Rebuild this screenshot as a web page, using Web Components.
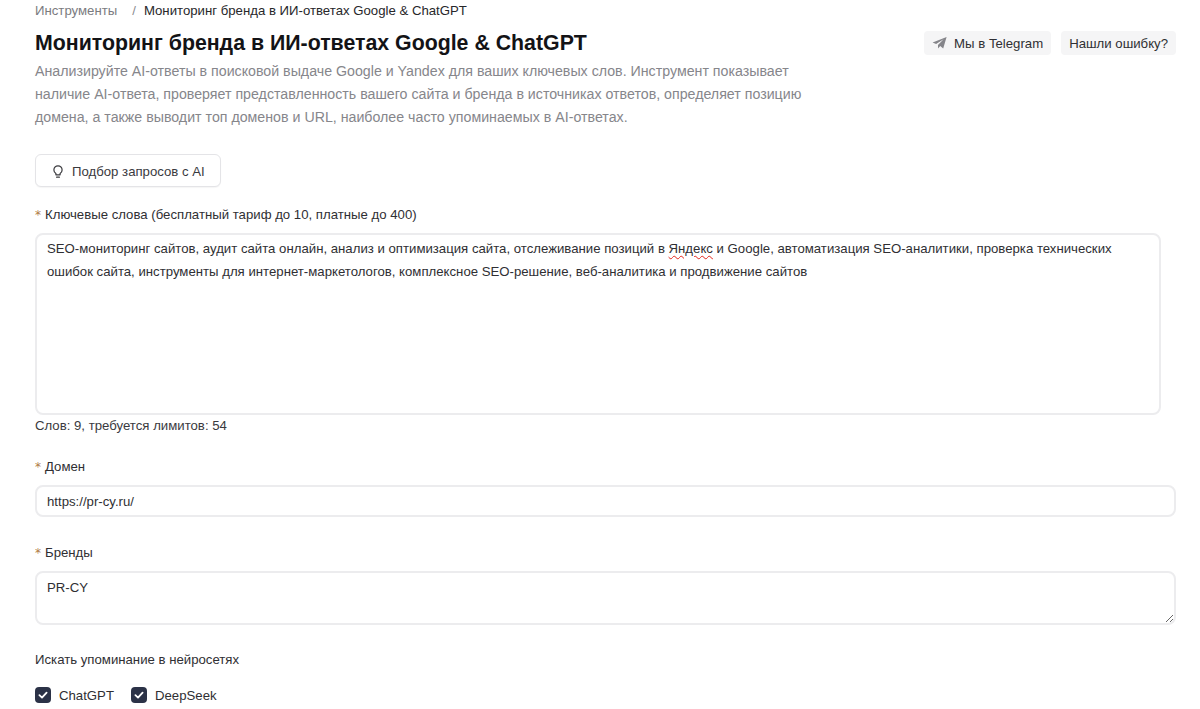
<!DOCTYPE html>
<html lang="ru">
<head>
<meta charset="utf-8">
<title>Мониторинг бренда</title>
<style>
  html, body { margin: 0; background: #fff; }
  body { font-family: "Liberation Sans", Arial, sans-serif; color: #27272a; overflow: hidden; height: 709px; }
  .typo { text-decoration: underline wavy #e2261c; text-decoration-thickness: 1px; text-underline-offset: 2px; }
</style>
</head>
<body>
<tool-page>
  <bread-crumbs parent="Инструменты">Мониторинг бренда в ИИ-ответах Google &amp; ChatGPT</bread-crumbs>
  <page-head>
    <span slot="title">Мониторинг бренда в ИИ-ответах Google &amp; ChatGPT</span>
    <soft-button slot="actions" icon="telegram">Мы в Telegram</soft-button>
    <soft-button slot="actions">Нашли ошибку?</soft-button>
    Анализируйте AI-ответы в поисковой выдаче Google и Yandex для ваших ключевых слов. Инструмент показывает наличие AI-ответа, проверяет представленность вашего сайта и бренда в источниках ответов, определяет позицию домена, а также выводит топ доменов и URL, наиболее часто упоминаемых в AI-ответах.
  </page-head>
  <ai-button>Подбор запросов с AI</ai-button>
  <form-field label="Ключевые слова (бесплатный тариф до 10, платные до 400)" required style="margin-top:19px">
    <text-box height="182" style="margin-right:15px">SEO-мониторинг сайтов, аудит сайта онлайн, анализ и оптимизация сайта, отслеживание позиций в <span class="typo">Яндекс</span> и Google, автоматизация SEO-аналитики, проверка технических<br>ошибок сайта, инструменты для интернет-маркетологов, комплексное SEO-решение, веб-аналитика и продвижение сайтов</text-box>
    <span slot="note">Слов: 9, требуется лимитов: 54</span>
  </form-field>
  <form-field label="Домен" required style="margin-top:24px">
    <text-box height="32" style="padding-top:3px">https://pr-cy.ru/</text-box>
  </form-field>
  <form-field label="Бренды" required style="margin-top:27px">
    <text-box height="54" resizable style="padding-top:3px">PR-CY</text-box>
  </form-field>
  <check-group label="Искать упоминание в нейросетях">
    <check-item>ChatGPT</check-item>
    <check-item>DeepSeek</check-item>
  </check-group>
</tool-page>

<script>
class ToolPage extends HTMLElement {
  constructor() {
    super()
    this.attachShadow({ mode: 'open' })
    this.shadowRoot.innerHTML = `
      <style>
        :host { display: flex; flex-direction: column; align-items: stretch; padding: 0 24px 0 35px; font-size: 13.2px; }
        ::slotted(ai-button) { align-self: flex-start; }
      </style>
      <slot></slot>
    `
  }
}

class BreadCrumbs extends HTMLElement {
  constructor() {
    super()
    this.attachShadow({ mode: 'open' })
    this.shadowRoot.innerHTML = `
      <style>
        :host { display: flex; height: 21px; align-items: center; font-size: 13.2px; color: #27272a; }
        .parent { color: #7b7b80; }
        .sep { color: #8b8b90; margin: 0 8px 0 15px; }
      </style>
      <span class="parent"></span><span class="sep">/</span><slot></slot>
    `
  }
  connectedCallback() {
    this.shadowRoot.querySelector('.parent').textContent = this.getAttribute('parent')
  }
}

class PageHead extends HTMLElement {
  constructor() {
    super()
    this.attachShadow({ mode: 'open' })
    this.shadowRoot.innerHTML = `
      <style>
        :host { display: block; }
        .top { display: flex; justify-content: space-between; align-items: center; height: 34px; padding-top: 5px; }
        h1 { margin: 0; padding-top: 1px; font-size: 21.32px; line-height: 33px; font-weight: 700; color: #131316; }
        .actions { display: flex; gap: 10px; }
        p { margin: 0; width: 785px; font-size: 14.21px; line-height: 23px; color: #86868b; }
      </style>
      <div class="top">
        <h1><slot name="title"></slot></h1>
        <div class="actions"><slot name="actions"></slot></div>
      </div>
      <p><slot></slot></p>
    `
  }
}

class SoftButton extends HTMLElement {
  constructor() {
    super()
    this.attachShadow({ mode: 'open' })
    this.shadowRoot.innerHTML = `
      <style>
        :host { display: inline-flex; align-items: center; gap: 7px; height: 24px; padding: 0 8px; background: #f5f5f6; border-radius: 4px; font-size: 13.2px; color: #2f2f33; }
        svg { width: 15px; height: 14px; display: block; }
      </style>
      <span id="ic"></span><slot></slot>
    `
  }
  connectedCallback() {
    const ic = this.shadowRoot.querySelector('#ic')
    if (this.getAttribute('icon') === 'telegram') {
      ic.innerHTML = `<svg viewBox="0 0 15 14"><path d="M14.6 1.1 L0.6 6.6 L4.1 8 L11.6 3.2 L6 8.9 L6 12.6 L8.2 10.1 L11.2 12.4 Z" fill="#85858a"/></svg>`
    } else {
      ic.remove()
    }
  }
}

class AiButton extends HTMLElement {
  constructor() {
    super()
    this.attachShadow({ mode: 'open' })
    this.shadowRoot.innerHTML = `
      <style>
        :host { display: inline-flex; align-items: center; gap: 7px; box-sizing: border-box; height: 33px; margin-top: 25px; padding: 1px 15px 0; background: #fff; border: 1px solid #e4e4e7; border-radius: 6px; font-size: 13.2px; color: #3a3a3e; box-shadow: 0 1px 1px rgba(0,0,0,.04); }
        svg { width: 14px; height: 15px; display: block; }
      </style>
      <svg viewBox="0 0 14 15" fill="none" stroke="#3a3a3e" stroke-width="1.2" stroke-linecap="round" stroke-linejoin="round">
        <path d="M4.9 9.6 C3.6 8.7 2.9 7.4 2.9 5.9 a4.1 4.1 0 0 1 8.2 0 C11.1 7.4 10.4 8.7 9.1 9.6 V10.8 H4.9 Z"/>
        <path d="M5.6 13.2 H8.4"/>
      </svg>
      <slot></slot>
    `
  }
}

class FormField extends HTMLElement {
  constructor() {
    super()
    this.attachShadow({ mode: 'open' })
    this.shadowRoot.innerHTML = `
      <style>
        :host { display: block; }
        .label { display: flex; align-items: center; height: 16px; font-size: 13.2px; color: #2f2f33; }
        .star { width: 10px; padding-top: 3px; color: #b07a45; font-family: "DejaVu Sans", sans-serif; font-size: 12px; line-height: 13px; }
        .control { margin-top: 11px; }
        .note { font-size: 13.2px; line-height: 16px; margin-top: 3px; color: #3a3a3e; }
      </style>
      <div class="label"><span class="star"></span><span class="text"></span></div>
      <div class="control"><slot></slot></div>
      <div class="note"><slot name="note"></slot></div>
    `
  }
  connectedCallback() {
    const root = this.shadowRoot
    root.querySelector('.text').textContent = this.getAttribute('label')
    root.querySelector('.star').textContent = this.hasAttribute('required') ? '*' : ''
    if (!this.querySelector('[slot=note]')) root.querySelector('.note').style.display = 'none'
  }
}

class TextBox extends HTMLElement {
  constructor() {
    super()
    this.attachShadow({ mode: 'open' })
    this.shadowRoot.innerHTML = `
      <style>
        :host { display: block; box-sizing: border-box; padding: 2px 10px; background: #fff; border: 2px solid #ececee; border-radius: 8px; font-size: 13.2px; line-height: 23px; color: #2f2f33; overflow: hidden; }
        :host([resizable]) { resize: vertical; overflow: auto; }
      </style>
      <slot></slot>
    `
  }
  connectedCallback() {
    this.style.height = this.getAttribute('height') + 'px'
  }
}

class CheckGroup extends HTMLElement {
  constructor() {
    super()
    this.attachShadow({ mode: 'open' })
    this.shadowRoot.innerHTML = `
      <style>
        :host { display: block; margin-top: 27px; }
        .title { font-size: 13.2px; line-height: 16px; color: #2f2f33; }
        .items { display: flex; gap: 17px; margin-top: 19px; }
      </style>
      <div class="title"></div>
      <div class="items"><slot></slot></div>
    `
  }
  connectedCallback() {
    this.shadowRoot.querySelector('.title').textContent = this.getAttribute('label')
  }
}

class CheckItem extends HTMLElement {
  constructor() {
    super()
    this.attachShadow({ mode: 'open' })
    this.shadowRoot.innerHTML = `
      <style>
        :host { display: inline-flex; align-items: center; gap: 8px; font-size: 13.2px; color: #2f2f33; }
        .box { width: 16px; height: 16px; border-radius: 4px; background: #2b3247; display: flex; align-items: center; justify-content: center; }
        svg { width: 12px; height: 12px; display: block; }
      </style>
      <span class="box"><svg viewBox="0 0 12 12" fill="none" stroke="#fff" stroke-width="1.8" stroke-linecap="round" stroke-linejoin="round"><path d="M2.4 6.2 L5 8.6 L9.6 3.6"/></svg></span>
      <slot></slot>
    `
  }
}

customElements.define('tool-page', ToolPage)
customElements.define('bread-crumbs', BreadCrumbs)
customElements.define('page-head', PageHead)
customElements.define('soft-button', SoftButton)
customElements.define('ai-button', AiButton)
customElements.define('form-field', FormField)
customElements.define('text-box', TextBox)
customElements.define('check-group', CheckGroup)
customElements.define('check-item', CheckItem)
</script>
</body>
</html>
